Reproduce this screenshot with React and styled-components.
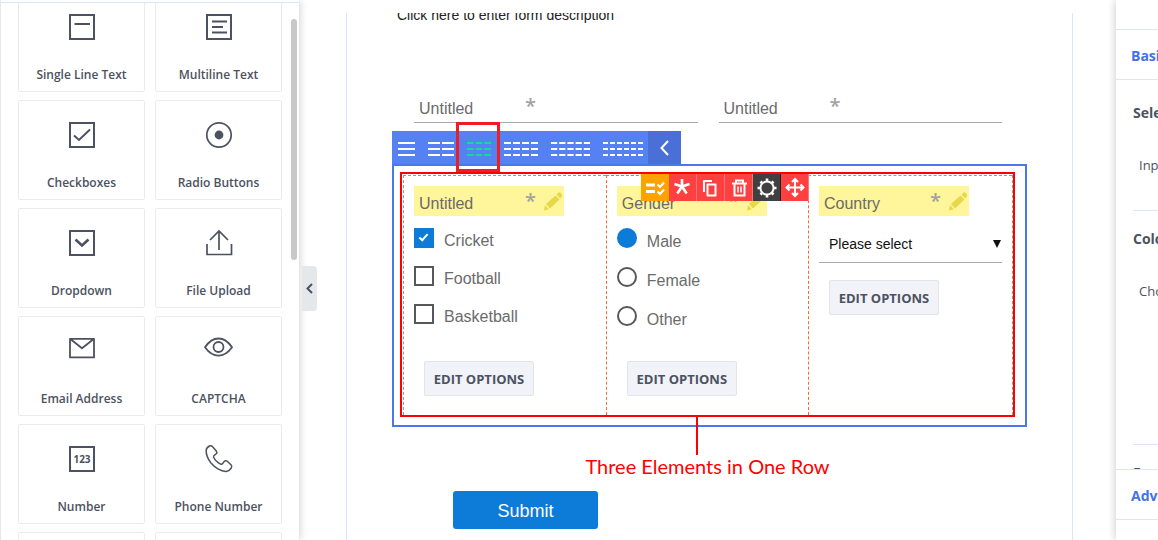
import React from "react";
import styled, { createGlobalStyle } from "styled-components";

const UI_FONT = '"Open Sans", "Noto Sans", sans-serif';
const FORM_FONT = '"Liberation Sans", Arial, sans-serif';
const INK = "#4c5261";

const GlobalStyle = createGlobalStyle`
  *, *::before, *::after { box-sizing: border-box; }
  body { margin: 0; background: #fff; overflow: hidden; }
  button, input, select { font: inherit; margin: 0; padding: 0; border-radius: 0; }
  svg { display: block; overflow: visible; }
`;

const Page = styled.div`
  display: flex;
  height: 100vh;
  overflow: hidden;
  background: #fff;
  font-family: ${UI_FONT};
  color: ${INK};
`;

/* ---------- element palette ---------- */

const Sidebar = styled.aside`
  position: relative;
  z-index: 1;
  flex: 0 0 299px;
  padding-top: 2px;
  border-left: 1px solid #e3e8ee;
  background: #fff;
  box-shadow: 1px 0 8px rgba(0, 0, 0, 0.18);
`;

const PaletteScroll = styled.div`
  height: 100%;
  padding: 0 17px;
  overflow: hidden;
  border-top: 1px solid #dae4fa;
`;

const PaletteGrid = styled.div`
  display: grid;
  grid-template-columns: 1fr 1fr;
  gap: 8px 10px;
  margin-top: -11px;
`;

const PaletteCard = styled.button`
  display: flex;
  flex-direction: column;
  align-items: center;
  gap: 25px;
  height: 100px;
  padding-top: 20px;
  border: 1px solid #e9ecef;
  border-radius: 2px;
  background: #fff;
  color: ${INK};
  font-size: 12px;
  font-weight: 600;
  line-height: 20px;
  white-space: nowrap;
`;

const PaletteIcon = styled.svg`
  flex: none;
  width: 27px;
  height: 27px;
  fill: none;
  stroke: ${INK};
  stroke-width: 2;
`;

const ScrollThumb = styled.div`
  position: absolute;
  top: 19px;
  right: 2px;
  width: 6px;
  height: 241px;
  border-radius: 3px;
  background: #c8c8c8;
`;

const CollapseButton = styled.button`
  position: absolute;
  top: 266px;
  left: calc(100% + 3px);
  display: grid;
  place-items: center;
  width: 15px;
  height: 45px;
  border: 0;
  border-radius: 0 4px 4px 0;
  background: #e4e8eb;
`;

/* ---------- form canvas ---------- */

const Main = styled.main`
  flex: 1;
  min-width: 0;
  padding: 13px 43px 0 47px;
  font-family: ${FORM_FONT};
`;

const Canvas = styled.form`
  height: 100%;
  padding: 0 45px;
  overflow: hidden;
  border: solid #dae4fa;
  border-width: 0 1px;
`;

const Description = styled.p`
  margin: -8px 0 0;
  padding-left: 5px;
  color: #222;
  font-size: 14px;
  line-height: 20px;
`;

const FieldRow = styled.div`
  display: grid;
  grid-template-columns: 1fr 1fr;
  gap: 21px;
  margin-top: 66px;
  padding: 0 25px 0 22px;
`;

const TextField = styled.div`
  display: grid;
  > * { grid-area: 1 / 1; }
`;

const TextInput = styled.input`
  width: 100%;
  height: 32px;
  border: 0;
  border-bottom: 1px solid #aaa;
  outline: 0;
  background: transparent;
`;

const FieldLabel = styled.label`
  display: flex;
  width: 150px;
  height: 30px;
  padding: 0 2px 0 5px;
  background: ${(p) => (p.$marked ? "#fff59a" : "transparent")};
  color: #6b6b6b;
  font-size: 16px;
  line-height: 36px;
`;

const LabelText = styled.span`
  flex: 0 0 106px;
`;

const Star = styled.span`
  flex: 0 0 18px;
  color: #a2a2a2;
  font-family: ${UI_FONT};
  font-size: 20px;
  font-weight: 600;
  line-height: 30px;
`;

/* ---------- column toolbar ---------- */

const ColumnBar = styled.div`
  display: flex;
  justify-content: space-between;
  width: 289px;
  height: 33px;
  margin-top: 8px;
  background: #5581f3;
`;

const ColumnOptions = styled.div`
  display: flex;
  gap: 13px;
  padding-left: 6px;
`;

const ColumnButton = styled.button`
  position: relative;
  display: flex;
  align-items: center;
  border: 0;
  background: transparent;
  color: ${(p) => (p.$active ? "#12dc9a" : "#fff")};
`;

const Highlight = styled.span`
  position: absolute;
  inset: -9px -9px -8px -11px;
  z-index: 2;
  border: 3px solid #ee1c24;
`;

const BackButton = styled.button`
  display: grid;
  place-items: center;
  width: 33px;
  border: 0;
  background: #4a70d8;
`;

/* ---------- selected row ---------- */

const SelectedRow = styled.section`
  padding: 6px 10px 8px 6px;
  border: 2px solid #4a78ec;
`;

const Outline = styled.div`
  position: relative;
  padding: 1px 0 0 1px;
  border: 2px solid #f00;
`;

const Columns = styled.div`
  display: grid;
  grid-template-columns: 33.3% 33.2% 1fr;
  min-height: 240px;
  border-right: 1px dashed #999;
`;

const Column = styled.div`
  position: relative;
  padding: 10px 10px 0;
  border-top: 1px dashed ${(p) => p.$top};
  border-left: 1px dashed ${(p) => p.$left};
`;

const ChoiceList = styled.div`
  display: grid;
  gap: ${(p) => (p.$round ? 19 : 18)}px;
  height: 145px;
  padding-top: 12px;
  align-content: start;
`;

const Choice = styled.label`
  display: flex;
  gap: 10px;
  height: 20px;
  color: #6b6b6b;
  font-size: 16px;
  line-height: ${(p) => (p.$round ? 28 : 26)}px;
`;

const CheckInput = styled.input`
  position: relative;
  appearance: none;
  flex: none;
  width: 20px;
  height: 20px;
  border: 2px solid #58585a;
  background: #fff;

  &:checked {
    border-color: #0d7bd8;
    background: #0d7bd8;
  }
  &:checked::after {
    content: "";
    position: absolute;
    top: 2px;
    left: 5px;
    width: 5px;
    height: 9px;
    border: solid #fff;
    border-width: 0 2px 2px 0;
    transform: rotate(42deg);
  }
`;

const RadioInput = styled.input`
  appearance: none;
  flex: none;
  width: 20px;
  height: 20px;
  border: 2px solid #58585a;
  border-radius: 50%;
  background: #fff;

  &:checked {
    border-color: #0d7bd8;
    background: #0d7bd8;
  }
`;

const SelectBox = styled.div`
  display: grid;
  align-items: center;
  height: 47px;
  margin-bottom: 17px;
  padding-top: 10px;
  border-bottom: 1px solid #aaa;
  color: #111;
  font-size: 14px;
  > * { grid-area: 1 / 1; }
`;

const Select = styled.select`
  appearance: none;
  width: 100%;
  height: 36px;
  padding-left: 10px;
  border: 0;
  background: transparent;
  color: inherit;
`;

const Arrow = styled.svg`
  justify-self: end;
  width: 8px;
  height: 8px;
  margin-right: 1px;
  fill: #111;
  pointer-events: none;
`;

const EditButton = styled.button`
  display: block;
  width: 110px;
  height: 35px;
  margin-left: 10px;
  border: 1px solid #e2e4ea;
  border-radius: 2px;
  background: #f2f3f9;
  color: ${INK};
  font-family: ${UI_FONT};
  font-size: 13px;
  font-weight: 700;
  white-space: nowrap;
`;

const ActionBar = styled.div`
  position: absolute;
  top: -2px;
  right: -1px;
  z-index: 1;
  display: flex;
`;

const ActionButton = styled.button`
  width: 28px;
  height: 27px;
  border: 0;
  border-right: 1px solid ${(p) => p.$edge || "#ff7474"};
  background: ${(p) => p.$tone || "#ff4040"};
`;

const ActionIcon = styled.svg`
  width: 28px;
  height: 27px;
  fill: none;
  stroke: #fff;
  stroke-width: 2;
`;

const Callout = styled.div`
  position: absolute;
  top: 100%;
  left: 0;
  right: 0;
  display: flex;
  flex-direction: column;
  align-items: center;
  color: #f00;
  font-family: Lato, sans-serif;
  font-size: 20px;
  line-height: 22px;
  pointer-events: none;

  &::before {
    content: "";
    width: 2px;
    height: 40px;
    margin-right: 22px;
    background: #f00;
  }
`;

const SubmitButton = styled.button`
  display: block;
  width: 145px;
  height: 38px;
  margin: 64px 0 0 61px;
  padding-top: 2px;
  border: 0;
  border-radius: 3px;
  background: #0d7bd8;
  color: #fff;
  font-size: 18px;
`;

/* ---------- settings panel ---------- */

const SettingsEdge = styled.div`
  z-index: 1;
  flex: 0 0 42px;
  display: flex;
  box-shadow: -1px 0 8px rgba(0, 0, 0, 0.18);
`;

const Settings = styled.aside`
  display: flex;
  flex-direction: column;
  flex: 0 0 42px;
  padding-top: 29px;
  overflow: hidden;
  background: #fff;
  white-space: nowrap;
`;

const SectionTitle = styled.h2`
  flex: none;
  height: 51px;
  margin: 0;
  padding-left: 15px;
  border: solid #dae4fa;
  border-width: 1px 0;
  color: #4372e6;
  font-size: 14px;
  font-weight: 700;
  line-height: 51px;
`;

const SectionBody = styled.div`
  flex: none;
  height: 389px;
  overflow: hidden;
`;

const Setting = styled.section`
  height: ${(p) => p.$height}px;
  margin-left: 17px;
  padding-top: ${(p) => p.$top}px;
  border-bottom: 1px solid #dae4fa;
`;

const SettingTitle = styled.h3`
  margin: 0;
  font-size: 14px;
  font-weight: 700;
  line-height: 20px;
`;

const SettingText = styled.p`
  margin: 32px 0 0 6px;
  font-size: 13px;
  line-height: 20px;
`;

/* ---------- drawings ---------- */

const Box = () => <rect x="2" y="2" width="24" height="24" />;

const PALETTE = [
  ["Single Line Text", <><Box /><path d="M6.5 11H22" /></>],
  ["Multiline Text", <><Box /><path d="M7 8.5H22M7 14H18M7 19.5H22" /></>],
  ["Checkboxes", <><Box /><path d="M6 14.5l5 4.5 11-10.5" /></>],
  ["Radio Buttons", <><circle cx="14" cy="14" r="12.2" strokeWidth="1.7" /><circle cx="14" cy="14" r="4.4" fill={INK} stroke="none" /></>],
  ["Dropdown", <><Box /><path d="M7.5 10.5l6.5 6 6.5-6" strokeWidth="2.6" /></>],
  ["File Upload", <path strokeWidth="1.7" d="M2 15v10.5h24.5V15M14 21V2M5 11l9-9 9 9" />],
  ["Email Address", <path strokeWidth="1.8" strokeLinejoin="round" d="M2 1.8h24v18.6H2zM2 1.8l12 9.4 12-9.4" />],
  ["CAPTCHA", <><path strokeWidth="1.8" d="M0 10.2C8-1.4 19-1.4 27 10.2C19 21.4 8 21.4 0 10.2z" /><circle cx="13.5" cy="10" r="5" strokeWidth="1.8" /></>],
  ["Number", <><Box /><text x="14" y="18" textAnchor="middle" fontSize="10" fontWeight="700" fill={INK} stroke="none">123</text></>],
  ["Phone Number", <path strokeWidth="1.5" strokeLinejoin="round" d="M1.2 5.2C1.2 3.5 3 1.8 4.5 1C5.6.5 6.8.8 7.6 1.8L11.3 6C12.2 7.2 12 8 11 9C9.6 10 8 10.6 8.5 12C10 15.2 12.6 17.6 16 19.3C17.4 19.6 18 18.4 18.8 17C19.8 15.6 21 15.3 22.2 16.2L26 19.8C27 20.8 27 22 26.3 23C25.2 24.6 24 26 22 26.3C16.6 27.2 9.8 22.6 6 18C3.2 14.4 1 9.6 1.2 5.2z" />],
  ["Date", <Box />],
  ["Time", <Box />],
];

const COLUMN_OPTIONS = [
  { count: 1, width: 17 },
  { count: 2, width: 26 },
  { count: 3, width: 24, active: true },
  { count: 4, width: 34 },
  { count: 5, width: 39 },
  { count: 6, width: 40 },
];

function ColumnsIcon({ count, width }) {
  const gap = 2;
  const cell = (width - gap * (count - 1)) / count;
  return (
    <svg width={width} height="14" viewBox={`0 -1 ${width} 14`} fill="currentColor">
      {[0, 6, 12].map((y) =>
        Array.from({ length: count }, (_, i) => (
          <rect key={`${y}-${i}`} x={i * (cell + gap)} y={y} width={cell} height="2" />
        ))
      )}
    </svg>
  );
}

const ACTIONS = [
  { name: "Options", tone: "#ffa200", edge: "#ffa200", icon: <><path strokeWidth="3" d="M5 11h9M5 17.5h9" /><path d="M16.5 10.5l2.5 2.5 4-4.5M16.5 17.5l2.5 2.5 4-4.5" /></> },
  { name: "Required", icon: <path strokeWidth="2.6" d="M13 12.500V5M13 12.500L5.5 10M13 12.500L20.500 10M13 12.500L8.300 19.500M13 12.500L17.700 19.500" /> },
  { name: "Duplicate", icon: <path strokeLinejoin="round" d="M10.5 10.5h8v11h-8zM7 18V7h8" /> },
  { name: "Delete", icon: <><path d="M7 9.5h15M11 9V6.5h7V9M9.5 10v11.5h10V10" /><path strokeWidth="1.5" d="M13 12.5v6M16 12.5v6" /></> },
  { name: "Settings", tone: "#404040", edge: "#222", icon: <><circle cx="14" cy="14" r="6.6" /><path strokeWidth="2.6" d="M14 7V4.500M14 21v2.500M7 14H4.500M21 14h2.500M9 9L7.500 7.500M19 9l1.500-1.500M9 19l-1.500 1.500M19 19l1.500 1.500" /></> },
  { name: "Move", icon: <path d="M14 5.5v16M6 13.5h16M11 8l3-3 3 3M11 19l3 3 3-3M8.5 10.5l-3 3 3 3M19.5 10.5l3 3-3 3" /> },
];

const PencilIcon = styled.svg`
  width: 20px;
  height: 20px;
  margin-top: 5px;
  fill: #e6d848;
`;

const Pencil = () => (
  <PencilIcon viewBox="0 0 20 20">
    <path d="M1 19.5L2 14l3.8 4.3zM3 13L12.5 4.5l4 4L7 17.5zM13.5 3.5L15.5 1.5Q16.5.8 17.5 1.8L18.8 3.2Q19.5 4.2 18.8 5.2L17.3 7.5z" />
  </PencilIcon>
);

const Chevron = ({ color, width, height, stroke }) => (
  <svg width={width} height={height} viewBox={`0 0 ${width} ${height}`} fill="none" stroke={color} strokeWidth={stroke}>
    <path d={`M${width - 1} 1L1.5 ${height / 2}L${width - 1} ${height - 1}`} />
  </svg>
);

function Label({ text, htmlFor, marked }) {
  return (
    <FieldLabel htmlFor={htmlFor} $marked={marked}>
      <LabelText>{text}</LabelText>
      <Star>*</Star>
      {marked && <Pencil />}
    </FieldLabel>
  );
}

const GREY = "#999999";
const ORANGE = "#f26b3a";

export default function App() {
  return (
    <Page>
      <GlobalStyle />
      <Sidebar>
        <PaletteScroll>
          <PaletteGrid>
            {PALETTE.map(([name, icon]) => (
              <PaletteCard key={name} type="button">
                <PaletteIcon viewBox="0 0 27 27">{icon}</PaletteIcon>
                {name}
              </PaletteCard>
            ))}
          </PaletteGrid>
        </PaletteScroll>
        <ScrollThumb />
        <CollapseButton type="button" aria-label="Collapse">
          <Chevron color={INK} width={7} height={11} stroke={2} />
        </CollapseButton>
      </Sidebar>

      <Main>
        <Canvas onSubmit={(e) => e.preventDefault()}>
          <Description>Click here to enter form description</Description>
          <FieldRow>
            {["first", "second"].map((id) => (
              <TextField key={id}>
                <Label text="Untitled" htmlFor={id} />
                <TextInput id={id} type="text" />
              </TextField>
            ))}
          </FieldRow>

          <ColumnBar>
            <ColumnOptions>
              {COLUMN_OPTIONS.map(({ count, width, active }) => (
                <ColumnButton key={count} type="button" $active={active} aria-label={`${count} per row`}>
                  <ColumnsIcon count={count} width={width} />
                  {active && <Highlight />}
                </ColumnButton>
              ))}
            </ColumnOptions>
            <BackButton type="button" aria-label="Back">
              <Chevron color="#fff" width={9} height={16} stroke={2} />
            </BackButton>
          </ColumnBar>

          <SelectedRow>
            <Outline>
              <Columns>
                <Column $top={GREY} $left={GREY}>
                  <Label text="Untitled" htmlFor="cricket" marked />
                  <ChoiceList>
                    {["Cricket", "Football", "Basketball"].map((name, i) => (
                      <Choice key={name}>
                        <CheckInput type="checkbox" id={name.toLowerCase()} defaultChecked={i === 0} />
                        {name}
                      </Choice>
                    ))}
                  </ChoiceList>
                  <EditButton type="button">EDIT OPTIONS</EditButton>
                </Column>
                <Column $top={ORANGE} $left={ORANGE}>
                  <Label text="Gender" htmlFor="male" marked />
                  <ActionBar>
                    {ACTIONS.map(({ name, tone, edge, icon }) => (
                      <ActionButton key={name} type="button" aria-label={name} $tone={tone} $edge={edge}>
                        <ActionIcon viewBox="0 0 28 27">{icon}</ActionIcon>
                      </ActionButton>
                    ))}
                  </ActionBar>
                  <ChoiceList $round>
                    {["Male", "Female", "Other"].map((name, i) => (
                      <Choice key={name} $round>
                        <RadioInput type="radio" name="gender" id={name.toLowerCase()} defaultChecked={i === 0} />
                        {name}
                      </Choice>
                    ))}
                  </ChoiceList>
                  <EditButton type="button">EDIT OPTIONS</EditButton>
                </Column>
                <Column $top={GREY} $left={ORANGE}>
                  <Label text="Country" htmlFor="country" marked />
                  <SelectBox>
                    <Select id="country">
                      <option>Please select</option>
                    </Select>
                    <Arrow viewBox="0 0 8 8"><path d="M0 0h8L4 8z" /></Arrow>
                  </SelectBox>
                  <EditButton type="button">EDIT OPTIONS</EditButton>
                </Column>
              </Columns>
              <Callout>Three Elements in One Row</Callout>
            </Outline>
          </SelectedRow>

          <SubmitButton type="submit">Submit</SubmitButton>
        </Canvas>
      </Main>

      <SettingsEdge>
        <Settings>
          <SectionTitle>Basic</SectionTitle>
          <SectionBody>
            <Setting $height={131} $top={23}>
              <SettingTitle>Select</SettingTitle>
              <SettingText>Input</SettingText>
            </Setting>
            <Setting $height={234} $top={18}>
              <SettingTitle>Color</SettingTitle>
              <SettingText>Choose</SettingText>
            </Setting>
            <Setting $height={60} $top={18}>
              <SettingTitle>Form</SettingTitle>
            </Setting>
          </SectionBody>
          <SectionTitle>Advanced</SectionTitle>
        </Settings>
      </SettingsEdge>
    </Page>
  );
}
